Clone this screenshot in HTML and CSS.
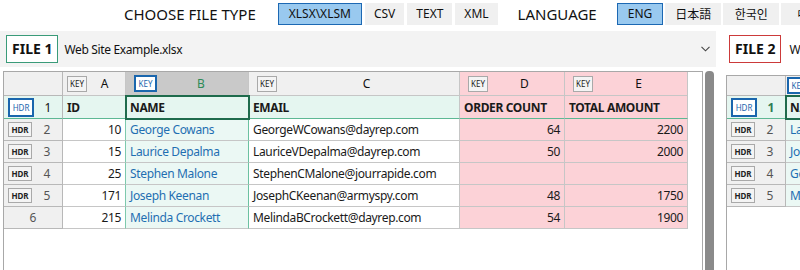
FILE: index.html
```html
<!DOCTYPE html>
<html lang="en">
<head>
<meta charset="utf-8">
<title>Compare files</title>
<link rel="stylesheet" href="styles.css">
</head>
<body>
<header class="topbar">
  <span class="tb-label">CHOOSE FILE TYPE</span>
  <div class="btns">
    <span class="btn active">XLSX\XLSM</span>
    <span class="btn">CSV</span>
    <span class="btn">TEXT</span>
    <span class="btn">XML</span>
  </div>
  <span class="tb-label lang">LANGUAGE</span>
  <div class="btns tight">
    <span class="btn active">ENG</span>
    <span class="btn cjk jp">日本語</span>
    <span class="btn cjk kr">한국인</span>
    <span class="btn cjk sc">中文</span>
  </div>
</header>

<main class="panels">
  <section class="panel p1">
    <div class="combo hover">
      <span class="file-tag green">FILE 1</span>
      <span class="fname">Web Site Example.xlsx</span>
      <svg class="chev" width="9" height="6" viewBox="0 0 9 6"><path d="M0.5 0.8 L4.5 4.8 L8.5 0.8" fill="none" stroke="#444" stroke-width="1.1"/></svg>
    </div>
    <div class="gridwrap">
      <div class="grid">
        <div class="row letters">
          <div class="cell rh"></div>
          <div class="cell colh first"><span class="key">KEY</span><span class="let">A</span></div>
          <div class="cell colh sel"><span class="key on">KEY</span><span class="let">B</span></div>
          <div class="cell colh"><span class="key">KEY</span><span class="let">C</span></div>
          <div class="cell colh pink"><span class="key">KEY</span><span class="let">D</span></div>
          <div class="cell colh pink"><span class="key">KEY</span><span class="let">E</span></div>
        </div>
        <div class="row hdrrow">
          <div class="cell rh mint"><span class="hdr on">HDR</span><span class="num">1</span></div>
          <div class="cell mint b-a">ID</div>
          <div class="cell mint b-b selcell">NAME</div>
          <div class="cell mint">EMAIL</div>
          <div class="cell pink">ORDER COUNT</div>
          <div class="cell pink">TOTAL AMOUNT</div>
        </div>
        <div class="row">
          <div class="cell rh"><span class="hdr">HDR</span><span class="num">2</span></div>
          <div class="cell r b-a">10</div>
          <div class="cell nm b-b">George Cowans</div>
          <div class="cell">GeorgeWCowans@dayrep.com</div>
          <div class="cell r pink">64</div>
          <div class="cell r pink">2200</div>
        </div>
        <div class="row">
          <div class="cell rh"><span class="hdr">HDR</span><span class="num">3</span></div>
          <div class="cell r b-a">15</div>
          <div class="cell nm b-b">Laurice Depalma</div>
          <div class="cell">LauriceVDepalma@dayrep.com</div>
          <div class="cell r pink">50</div>
          <div class="cell r pink">2000</div>
        </div>
        <div class="row">
          <div class="cell rh"><span class="hdr">HDR</span><span class="num">4</span></div>
          <div class="cell r b-a">25</div>
          <div class="cell nm b-b">Stephen Malone</div>
          <div class="cell">StephenCMalone@jourrapide.com</div>
          <div class="cell r pink"></div>
          <div class="cell r pink"></div>
        </div>
        <div class="row">
          <div class="cell rh"><span class="hdr">HDR</span><span class="num">5</span></div>
          <div class="cell r b-a">171</div>
          <div class="cell nm b-b">Joseph Keenan</div>
          <div class="cell">JosephCKeenan@armyspy.com</div>
          <div class="cell r pink">48</div>
          <div class="cell r pink">1750</div>
        </div>
        <div class="row">
          <div class="cell rh center"><span class="num">6</span></div>
          <div class="cell r b-a">215</div>
          <div class="cell nm b-b">Melinda Crockett</div>
          <div class="cell">MelindaBCrockett@dayrep.com</div>
          <div class="cell r pink">54</div>
          <div class="cell r pink">1900</div>
        </div>
      </div>
      <div class="vscroll"><div class="thumb"></div></div>
    </div>
  </section>

  <section class="panel p2">
    <div class="combo">
      <span class="file-tag red">FILE 2</span>
      <span class="fname">Web Site Example 2.xlsx</span>
    </div>
    <div class="gridwrap g2">
      <div class="grid">
        <div class="row letters short">
          <div class="cell rh"></div>
          <div class="cell colh tightcol"><span class="key on">KEY</span><span class="let">B</span></div>
        </div>
        <div class="row hdrrow">
          <div class="cell rh mint"><span class="hdr on">HDR</span><span class="num selnum">1</span></div>
          <div class="cell mint b-b selcell">NAME</div>
        </div>
        <div class="row">
          <div class="cell rh"><span class="hdr">HDR</span><span class="num">2</span></div>
          <div class="cell nm b-b">Laurice Depalma</div>
        </div>
        <div class="row">
          <div class="cell rh"><span class="hdr">HDR</span><span class="num">3</span></div>
          <div class="cell nm b-b">Joseph Keenan</div>
        </div>
        <div class="row">
          <div class="cell rh"><span class="hdr">HDR</span><span class="num">4</span></div>
          <div class="cell nm b-b">George Cowans</div>
        </div>
        <div class="row">
          <div class="cell rh"><span class="hdr">HDR</span><span class="num">5</span></div>
          <div class="cell nm b-b">Melinda Crockett</div>
        </div>
      </div>
    </div>
  </section>
</main>
</body>
</html>
```

FILE: styles.css
```css
* { box-sizing: border-box; }

html, body {
  margin: 0;
  padding: 0;
  background: #ffffff;
}

body {
  width: 800px;
  height: 270px;
  overflow: hidden;
  font-family: "Noto Sans", "Open Sans", sans-serif;
  color: #1a1a1a;
}

/* ---------- top bar ---------- */
.topbar {
  height: 31px;
  display: flex;
  align-items: flex-start;
  padding: 3px 0 0 124px;
  white-space: nowrap;
}

.tb-label {
  height: 22px;
  line-height: 22px;
  font-size: 15px;
  color: #111;
  margin-right: 22px;
}

.tb-label.lang {
  margin-left: 20px;
  margin-right: 20px;
}

.btns {
  display: flex;
  gap: 3px;
}

.btns.tight {
  gap: 2px;
}

.btn {
  height: 22px;
  line-height: 20px;
  padding: 0 8px;
  font-size: 12px;
  background: #f0f0f0;
  border: 1px solid #f0f0f0;
  color: #111;
}

.btn.active {
  background: #99c9ef;
  border-color: #1c68b3;
  padding: 0 10px;
}

.btn.cjk {
  width: 56px;
  padding: 0;
  text-align: center;
}

.btn.jp { font-family: "Noto Sans CJK JP", sans-serif; }
.btn.kr { font-family: "Noto Sans CJK KR", sans-serif; }
.btn.sc { font-family: "Noto Sans CJK SC", sans-serif; }

/* ---------- panels ---------- */
.panels {
  display: flex;
  width: 1600px;
}

.panel {
  width: 716px;
  flex: none;
}

.p2 {
  margin-left: 7px;
}

.combo {
  height: 36px;
  display: flex;
  align-items: center;
  padding-left: 6px;
}

.combo.hover {
  background: #f3f3f3;
}

.file-tag {
  height: 28px;
  line-height: 26px;
  padding: 0 5px;
  font-size: 14px;
  font-weight: 700;
  background: #fff;
  color: #111;
}

.file-tag.green { border: 1px solid #3a9b79; }
.file-tag.red { border: 1px solid #cc3a3a; }

.fname {
  margin-left: 6px;
  font-size: 12px;
  letter-spacing: -0.35px;
  color: #111;
}

.p2 .fname { margin-left: 8px; }

.chev {
  margin-left: auto;
  margin-right: 6px;
}

/* ---------- grid ---------- */
.gridwrap {
  margin: 4px 0 0 3px;
  display: flex;
  height: 210px;
}

.gridwrap.g2 {
  margin-top: 8px;
}

.grid {
  width: 700px;
  height: 230px;
  border: 1px solid #a8a8a8;
  border-bottom: none;
  background: #fff;
}

.row {
  display: grid;
  grid-template-columns: 59px 63px 123px 211px 105px 123px;
  height: 22px;
}

.g2 .row {
  grid-template-columns: 59px 123px;
}

.row.letters { height: 24px; }
.row.letters.short { height: 20px; }
.row.hdrrow { height: 23px; }

.cell {
  display: flex;
  align-items: center;
  padding: 0 4px;
  font-size: 12px;
  letter-spacing: -0.35px;
  white-space: nowrap;
  overflow: hidden;
  border-right: 1px solid #c6c6c6;
  border-bottom: 1px solid #c6c6c6;
  color: #1a1a1a;
}

.cell.r { justify-content: flex-end; padding-right: 4px; }

.cell.rh {
  background: #f0f0f0;
  padding: 0 0 0 4px;
  border-color: #b8b8b8;
  letter-spacing: 0;
}

.cell.rh.center { justify-content: center; padding: 0; }

.cell.mint { background: #e5f6f0; }
.cell.pink { background: #fcd2d7; }

.hdrrow .cell {
  font-weight: 700;
  border-bottom-color: #5db894;
}

.hdrrow .cell.rh { font-weight: 400; }

.cell.b-a { border-right-color: #7ec9ad; }
.cell.b-b { border-right-color: #6cc1a1; }

.cell.nm {
  background: #ebf8f4;
  color: #1f6fb2;
}

.cell.selcell {
  outline: 2px solid #1e6b4c;
  outline-offset: -1px;
  position: relative;
  z-index: 1;
}

/* letter row */
.letters .cell { background: #f0f0f0; padding: 0 0 0 8px; letter-spacing: 0; }
.letters .cell.rh { padding: 0; }
.letters .cell.first { padding-left: 4px; }
.letters .cell.sel { background: #c9c9c9; }
.letters .cell.pink { background: #fcd2d7; }
.letters .cell.tightcol { padding-left: 1px; }

.let {
  flex: 1;
  text-align: center;
  padding-right: 3px;
  font-size: 12px;
  color: #111;
}

.sel .let { color: #2e8b57; }

.key {
  width: 20px;
  height: 16px;
  line-height: 14px;
  text-align: center;
  font-size: 8px;
  background: #f4f4f4;
  border: 1px solid #a9a9a9;
  color: #222;
  flex: none;
}

.key.on {
  width: 23px;
  height: 17px;
  line-height: 13px;
  background: #fff;
  border: 2px solid #1a66ad;
  color: #1a66ad;
}

.hdr {
  width: 24px;
  height: 15px;
  line-height: 13px;
  text-align: center;
  font-size: 8px;
  font-weight: 700;
  background: #f4f4f4;
  border: 1px solid #a9a9a9;
  color: #222;
  flex: none;
}

.hdr.on {
  width: 26px;
  height: 19px;
  line-height: 15px;
  background: #fff;
  border: 2px solid #1a66ad;
  color: #1a66ad;
  font-weight: 400;
}

.num {
  flex: 1;
  text-align: center;
  font-size: 12px;
  color: #555;
}

.center .num { flex: none; }

.hdrrow .num { color: #111; }
.num.selnum { color: #2e7d55; font-weight: 700; }

/* scrollbar */
.vscroll {
  width: 13px;
  padding-left: 2px;
  flex: none;
}

.thumb {
  width: 9px;
  height: 260px;
  background: #8a8a8a;
  border-radius: 4px;
}
```
